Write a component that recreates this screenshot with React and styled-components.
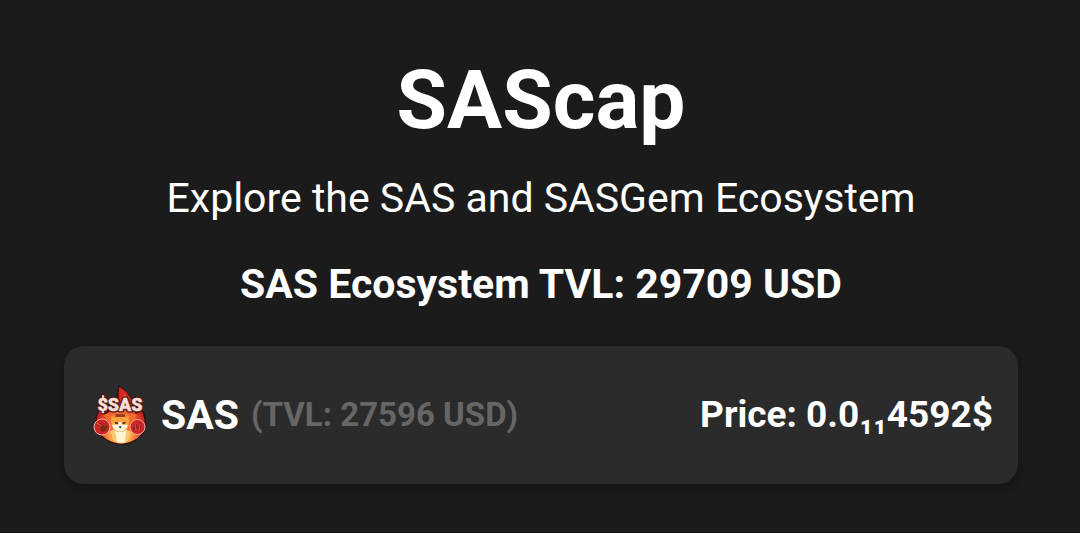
import React from "react";
import styled, { createGlobalStyle } from "styled-components";

const GlobalStyle = createGlobalStyle`
  body {
    margin: 0;
    background: #1b1b1b;
    color: #ffffff;
    font-family: Roboto, "Liberation Sans", sans-serif;
  }
`;

const Page = styled.main`
  box-sizing: border-box;
  min-height: 100vh;
  padding: 52px 62px 48px 64px;
  border-bottom: 1px solid #130f10;
`;

const Header = styled.header`
  display: flex;
  flex-direction: column;
  align-items: center;
  text-align: center;
`;

const Title = styled.h1`
  margin: 0;
  font-size: 82px;
  line-height: 96px;
  font-weight: 700;
`;

const Tagline = styled.p`
  margin: 26px 0 0;
  font-size: 41px;
  line-height: 48px;
`;

const Total = styled.h2`
  margin: 38px 0 0;
  font-size: 41px;
  line-height: 48px;
  font-weight: 700;
`;

const TokenCard = styled.article`
  display: flex;
  align-items: center;
  justify-content: space-between;
  box-sizing: border-box;
  min-height: 138px;
  margin-top: 38px;
  padding: 25px 25px 25px 26px;
  border-radius: 20px;
  background: #2b2b2b;
  box-shadow: 0 5px 13px rgba(0, 0, 0, 0.3);
`;

const Token = styled.div`
  display: flex;
  align-items: center;
`;

const Logo = styled.svg`
  flex: none;
  width: 60px;
  height: 64px;
  margin-right: 11px;
`;

const TokenName = styled.h3`
  margin: 0;
  font-size: 41px;
  line-height: 48px;
  font-weight: 700;
`;

const TokenTvl = styled.span`
  margin-left: 12px;
  font-size: 33px;
  line-height: 48px;
  font-weight: 700;
  color: #666666;
`;

const Price = styled.span`
  font-size: 37px;
  line-height: 48px;
  font-weight: 700;
`;

const LogoText = styled.text`
  font-family: Roboto, sans-serif;
  font-size: 18px;
  font-weight: 900;
  text-anchor: middle;
  paint-order: stroke;
  stroke-linejoin: round;
`;

function FlameShibaLogo() {
  return (
    <Logo viewBox="0 0 60 64" role="img" aria-label="SAS logo">
      <defs>
        <radialGradient id="flame" cx="50%" cy="78%" r="52%">
          <stop offset="0" stopColor="#fff0b0" />
          <stop offset="0.4" stopColor="#ffb04a" />
          <stop offset="0.75" stopColor="#ea4a2b" />
          <stop offset="1" stopColor="#c4231f" />
        </radialGradient>
      </defs>
      <path
        d="M29 3C35 7 40 12 43 19L46 30L52 27Q57 37 55 46Q50 59 32 61.500Q13 60 7 46Q4 36 9 27L15 31L28 20Q27 11 29 3Z"
        fill="url(#flame)"
        stroke="#2e1010"
        strokeWidth="1.500"
      />
      <path d="M29.500 4Q38 9 42 18L30 19Q28 11 29.500 4Z" fill="#d5281f" />
      <path d="M34 11Q38 14 39 18L32 19Z" fill="#f0563b" />
      <path d="M13 32Q18 37 19 44L22 55Q24 46 22 36L19 30Z" fill="#f6692f" />
      <path d="M47 32Q43 37 41 44L38 55Q36 46 38 36L41 30Z" fill="#f6692f" />
      <path d="M20 48Q30 44 40 48L38 58Q31 62 24 58Z" fill="#ffc978" />
      <path d="M25 48Q31 46 36 48L35 59Q31 61 27 59Z" fill="#fff5d0" />
      <path
        d="M21.500 33L25 35Q30 33 35 35L38.500 33Q40 38 38.500 43Q36 49 30 49Q24 49 22 43Q20 38 21.500 33Z"
        fill="#f8a33c"
      />
      <path d="M22 42Q25 41 27.500 42L29 39H31L32.500 42Q35 41 38 42Q36 48.500 30 48.500Q24 48.500 22 42Z" fill="#fff4e2" />
      <path d="M25 39.500L28 40.500M35.500 39.500L32.500 40.500" stroke="#4a220f" strokeWidth="1.500" />
      <path d="M28.500 43.500H32L30.200 45.500Z" fill="#241919" />
      <path d="M25.500 31H35V34H25.500Z" fill="#a23a1c" />
      <circle cx="12" cy="44" r="8" fill="#cb2421" stroke="#f3b0a6" strokeWidth="1" />
      <path d="M8 41L11 40L14 43L18 42L17 46L13 49L10 47L11 44Z" fill="#7c291a" />
      <path d="M7 40L12 43" stroke="#d66a42" strokeWidth="1" />
      <circle cx="47.500" cy="44" r="7.500" fill="#cb2421" stroke="#f3b0a6" strokeWidth="1" />
      <path d="M43 47L45 40L48 43L51 38L51 47L47 45Z" fill="#962124" />
      <path d="M45 40L46 48M50 41L49 48" stroke="#e44b43" strokeWidth="1" />
      <LogoText x="30" y="28" fill="#4a1712" stroke="#4a1712" strokeWidth="3">
        $SAS
      </LogoText>
      <LogoText x="30" y="28" fill="#ffe0d6" stroke="#ffe0d6" strokeWidth="0.400">
        $SAS
      </LogoText>
    </Logo>
  );
}

export default function App() {
  return (
    <>
      <GlobalStyle />
      <Page>
        <Header>
          <Title>SAScap</Title>
          <Tagline>Explore the SAS and SASGem Ecosystem</Tagline>
          <Total>SAS Ecosystem TVL: 29709 USD</Total>
        </Header>
        <TokenCard>
          <Token>
            <FlameShibaLogo />
            <TokenName>SAS</TokenName>
            <TokenTvl>(TVL: 27596 USD)</TokenTvl>
          </Token>
          <Price>Price: 0.0₁₁4592$</Price>
        </TokenCard>
      </Page>
    </>
  );
}
